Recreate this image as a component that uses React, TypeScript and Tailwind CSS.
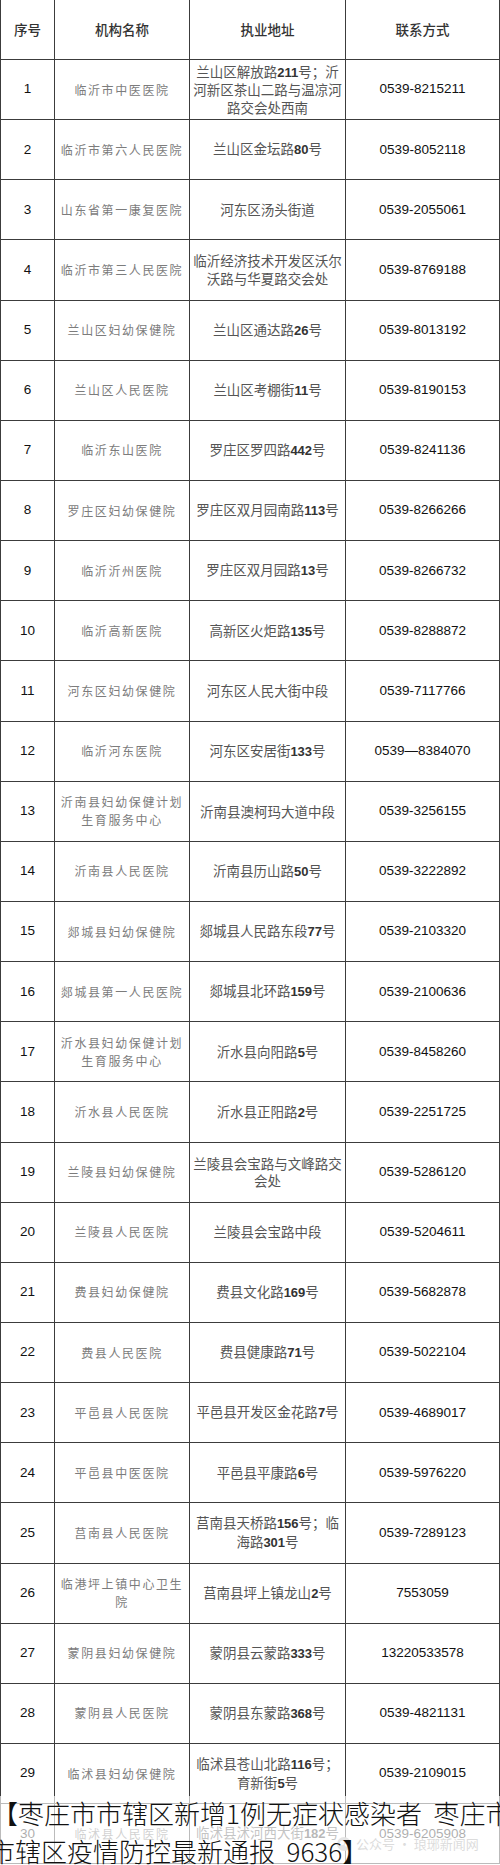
import React from 'react'

interface Row {
  no: number
  name: string[]
  addr: string[]
  phone: string
}

const rows: Row[] = [
  { no: 1, name: ['临沂市中医医院'], addr: ['兰山区解放路211号；沂', '河新区茶山二路与温凉河', '路交会处西南'], phone: '0539-8215211' },
  { no: 2, name: ['临沂市第六人民医院'], addr: ['兰山区金坛路80号'], phone: '0539-8052118' },
  { no: 3, name: ['山东省第一康复医院'], addr: ['河东区汤头街道'], phone: '0539-2055061' },
  { no: 4, name: ['临沂市第三人民医院'], addr: ['临沂经济技术开发区沃尔', '沃路与华夏路交会处'], phone: '0539-8769188' },
  { no: 5, name: ['兰山区妇幼保健院'], addr: ['兰山区通达路26号'], phone: '0539-8013192' },
  { no: 6, name: ['兰山区人民医院'], addr: ['兰山区考棚街11号'], phone: '0539-8190153' },
  { no: 7, name: ['临沂东山医院'], addr: ['罗庄区罗四路442号'], phone: '0539-8241136' },
  { no: 8, name: ['罗庄区妇幼保健院'], addr: ['罗庄区双月园南路113号'], phone: '0539-8266266' },
  { no: 9, name: ['临沂沂州医院'], addr: ['罗庄区双月园路13号'], phone: '0539-8266732' },
  { no: 10, name: ['临沂高新医院'], addr: ['高新区火炬路135号'], phone: '0539-8288872' },
  { no: 11, name: ['河东区妇幼保健院'], addr: ['河东区人民大街中段'], phone: '0539-7117766' },
  { no: 12, name: ['临沂河东医院'], addr: ['河东区安居街133号'], phone: '0539—8384070' },
  { no: 13, name: ['沂南县妇幼保健计划', '生育服务中心'], addr: ['沂南县澳柯玛大道中段'], phone: '0539-3256155' },
  { no: 14, name: ['沂南县人民医院'], addr: ['沂南县历山路50号'], phone: '0539-3222892' },
  { no: 15, name: ['郯城县妇幼保健院'], addr: ['郯城县人民路东段77号'], phone: '0539-2103320' },
  { no: 16, name: ['郯城县第一人民医院'], addr: ['郯城县北环路159号'], phone: '0539-2100636' },
  { no: 17, name: ['沂水县妇幼保健计划', '生育服务中心'], addr: ['沂水县向阳路5号'], phone: '0539-8458260' },
  { no: 18, name: ['沂水县人民医院'], addr: ['沂水县正阳路2号'], phone: '0539-2251725' },
  { no: 19, name: ['兰陵县妇幼保健院'], addr: ['兰陵县会宝路与文峰路交', '会处'], phone: '0539-5286120' },
  { no: 20, name: ['兰陵县人民医院'], addr: ['兰陵县会宝路中段'], phone: '0539-5204611' },
  { no: 21, name: ['费县妇幼保健院'], addr: ['费县文化路169号'], phone: '0539-5682878' },
  { no: 22, name: ['费县人民医院'], addr: ['费县健康路71号'], phone: '0539-5022104' },
  { no: 23, name: ['平邑县人民医院'], addr: ['平邑县开发区金花路7号'], phone: '0539-4689017' },
  { no: 24, name: ['平邑县中医医院'], addr: ['平邑县平康路6号'], phone: '0539-5976220' },
  { no: 25, name: ['莒南县人民医院'], addr: ['莒南县天桥路156号；临', '海路301号'], phone: '0539-7289123' },
  { no: 26, name: ['临港坪上镇中心卫生', '院'], addr: ['莒南县坪上镇龙山2号'], phone: '7553059' },
  { no: 27, name: ['蒙阴县妇幼保健院'], addr: ['蒙阴县云蒙路333号'], phone: '13220533578' },
  { no: 28, name: ['蒙阴县人民医院'], addr: ['蒙阴县东蒙路368号'], phone: '0539-4821131' },
  { no: 29, name: ['临沭县妇幼保健院'], addr: ['临沭县苍山北路116号；', '育新街5号'], phone: '0539-2109015' },
  { no: 30, name: ['临沭县人民医院'], addr: ['临沭县沭河西大街182号'], phone: '0539-6205908' },
]

// digits inside addresses are set in a bold latin face
function AddrLine({ text }: { text: string }) {
  const parts = text.split(/(\d+)/)
  return (
    <div>
      {parts.map((p, i) =>
        /^\d+$/.test(p) ? (
          <span key={i} className="font-bold font-['Liberation_Sans',sans-serif] text-[#333] text-[13px]">
            {p}
          </span>
        ) : (
          <span key={i}>{p}</span>
        )
      )}
    </div>
  )
}

export default function App() {
  return (
    <div className="relative w-[500px] h-[1865px] overflow-hidden bg-white">
      <div className="w-[500px] border-l border-[#3c3c3c]">
        {/* header */}
        <div className="grid grid-cols-[54px_135px_156px_154px] h-[60px] text-[13.5px] text-[#333] font-medium font-['Noto_Sans_CJK_SC',sans-serif]">
          <div className="flex items-center justify-center border-r border-b border-[#3c3c3c]">序号</div>
          <div className="flex items-center justify-center border-r border-b border-[#3c3c3c]">机构名称</div>
          <div className="flex items-center justify-center border-r border-b border-[#3c3c3c]">执业地址</div>
          <div className="flex items-center justify-center border-r border-b border-[#3c3c3c]">联系方式</div>
        </div>

        {rows.map((r) => (
          <div key={r.no} className="grid grid-cols-[54px_135px_156px_154px] h-[60.15px]">
            <div className="flex items-center justify-center border-r border-b border-[#3c3c3c] text-[13.5px] text-[#111] font-['Liberation_Sans',sans-serif]">
              {r.no}
            </div>
            <div className="flex flex-col items-center justify-center border-r border-b border-[#3c3c3c] text-[12px] leading-[18px] tracking-[1.6px] text-[#7c7c7c] font-['Noto_Sans_CJK_SC',sans-serif]">
              {r.name.map((n) => (
                <div key={n}>{n}</div>
              ))}
            </div>
            <div className="flex flex-col items-center justify-center text-center border-r border-b border-[#3c3c3c] text-[13.5px] leading-[17.5px] text-[#555] font-['Noto_Sans_CJK_SC',sans-serif]">
              {r.addr.map((a) => (
                <AddrLine key={a} text={a} />
              ))}
            </div>
            <div className="flex items-center justify-center border-r border-b border-[#3c3c3c] text-[13.5px] text-[#111] font-['Liberation_Sans',sans-serif]">
              {r.phone}
            </div>
          </div>
        ))}
      </div>

      {/* watermark over the last row */}
      <div className="absolute left-[336px] top-[1834px] flex items-center gap-1 text-[13px] text-[#9a9a9a] font-['Noto_Sans_CJK_SC',sans-serif]">
        <svg width="16" height="16" viewBox="0 0 16 16">
          <circle cx="8" cy="8" r="7" fill="#b5b5b5" />
          <circle cx="6" cy="7" r="2.2" fill="#fff" />
          <circle cx="10.5" cy="9" r="1.8" fill="#fff" />
        </svg>
        <span>公众号 · 琅琊新闻网</span>
      </div>

      {/* caption band */}
      <div className="absolute left-0 right-0 top-[1796px] bottom-0 overflow-hidden bg-white/65 text-[26px] leading-[38px] text-[#111] font-light font-['Noto_Sans_CJK_SC',sans-serif]">
        <div className="whitespace-pre -ml-[8px] -mt-[2px]">【枣庄市市辖区新增1例无症状感染者  枣庄市</div>
        <div className="whitespace-pre -ml-[11px]">市辖区疫情防控最新通报  9636】</div>
      </div>
    </div>
  )
}
